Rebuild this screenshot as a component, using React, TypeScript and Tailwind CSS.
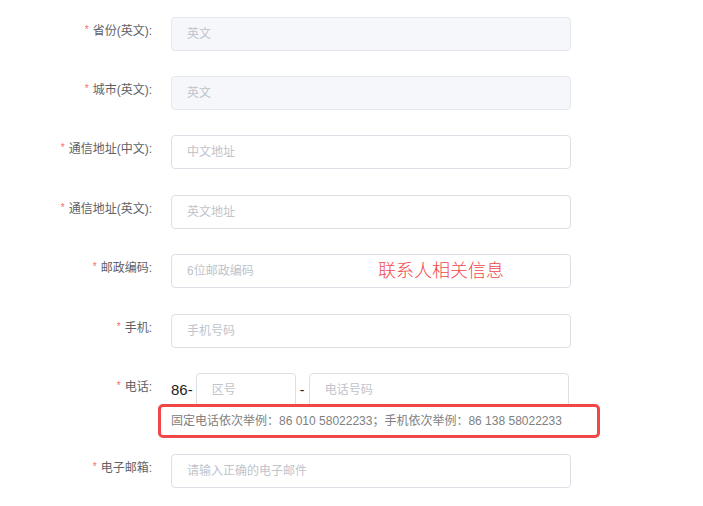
import React from "react";

const font = { fontFamily: '"Liberation Sans", "Noto Sans CJK SC", sans-serif' };

function Label({ text }: { text: string }) {
  return (
    <div className="w-[171px] shrink-0 pr-[19px] flex justify-end items-start">
      <span className="leading-[28px] text-[12px] text-[#606266] whitespace-nowrap">
        <span className="text-[#f56c6c] text-[10px] mr-[4px] relative top-[-2px]">*</span>
        {text}
      </span>
    </div>
  );
}

function Input({ placeholder, disabled, w = "w-[400px]" }: { placeholder: string; disabled?: boolean; w?: string }) {
  return (
    <div
      className={`${w} h-[34px] rounded-[4px] border flex items-center pl-[15px] text-[12px] text-[#c0c4cc] ${
        disabled ? "bg-[#f5f7fa] border-[#e4e7ed]" : "bg-white border-[#dcdfe6]"
      }`}
    >
      {placeholder}
    </div>
  );
}

function Row({ label, placeholder, disabled, mt, children }: { label: string; placeholder?: string; disabled?: boolean; mt: string; children?: React.ReactNode }) {
  return (
    <div className={`flex ${mt}`}>
      <Label text={label} />
      {children ?? <Input placeholder={placeholder || ""} disabled={disabled} />}
    </div>
  );
}

export default function App() {
  return (
    <div className="w-[703px] h-[506px] bg-white relative overflow-hidden" style={font}>
      <div className="flex flex-col">
        <Row mt="mt-[17px]" label="省份(英文):" placeholder="英文" disabled />
        <Row mt="mt-[25px]" label="城市(英文):" placeholder="英文" disabled />
        <Row mt="mt-[25px]" label="通信地址(中文):" placeholder="中文地址" />
        <Row mt="mt-[26px]" label="通信地址(英文):" placeholder="英文地址" />
        <div className="flex mt-[25px]">
          <Label text="邮政编码:" />
          <div className="w-[400px] h-[34px] rounded-[4px] border border-[#dcdfe6] flex items-center pl-[15px] text-[12px] text-[#c0c4cc] relative">
            6位邮政编码
            <span className="absolute left-[206px] top-[3px] text-[18px] leading-[26px] font-light text-[#f04a4a]">联系人相关信息</span>
          </div>
        </div>
        <Row mt="mt-[26px]" label="手机:" placeholder="手机号码" />
        <div className="flex mt-[25px]">
          <Label text="电话:" />
          <div className="flex flex-col">
            <div className="flex items-center h-[34px]">
              <span className="text-[15px] text-[#222] mr-[3px]">86-</span>
              <Input placeholder="区号" w="w-[100px]" />
              <span className="text-[14px] text-[#222] mx-[4px] w-[5px]">-</span>
              <Input placeholder="电话号码" w="w-[260px]" />
            </div>
            <div className="h-[28px] flex items-center text-[12px] text-[#808080]">
              固定电话依次举例：86 010 58022233；手机依次举例：86 138 58022233
            </div>
          </div>
        </div>
        <Row mt="mt-[19px]" label="电子邮箱:" placeholder="请输入正确的电子邮件" />
      </div>
      <div className="absolute left-[158px] top-[404px] w-[442px] h-[34px] border-[3px] border-[#f04848] rounded-[5px]" />
    </div>
  );
}
